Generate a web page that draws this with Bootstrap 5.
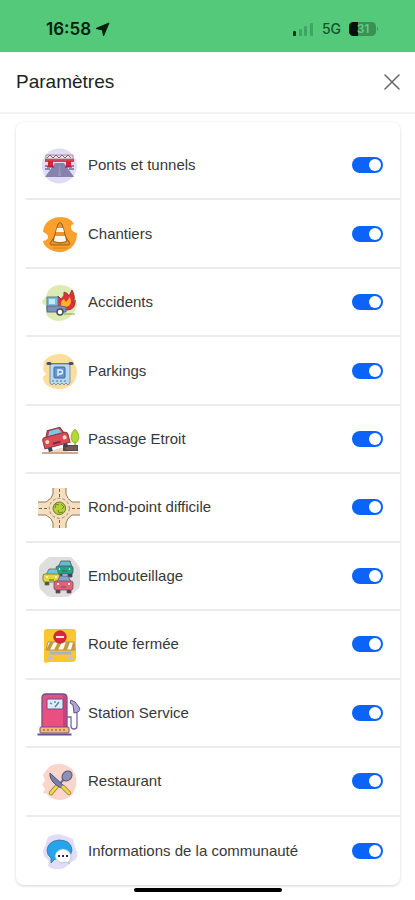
<!DOCTYPE html>
<html lang="fr">
<head>
<meta charset="utf-8">
<meta name="viewport" content="width=device-width, initial-scale=1">
<title>Paramètres</title>
<link href="https://cdn.jsdelivr.net/npm/bootstrap@5.3.0/dist/css/bootstrap.min.css" rel="stylesheet">
<style>
body { font-family: "Liberation Sans", Arial, sans-serif; color: #383838; background: #fff; }
.status-bar { background: #53c979; height: 52px; padding: 6px 36px 0 46px; color: #062b14; }
.clock { font-family: Inter, sans-serif; font-size: 17px; font-weight: 600; line-height: 20px; color: #04200e; }
.network { font-family: Inter, sans-serif; font-size: 14px; font-weight: 500; line-height: 20px; color: #14552c; }
.title-bar { height: 62px; padding: 0 15px 0 16px; border-bottom: 2px solid #f3f3f3; }
.title-bar h1 { font-size: 19px; line-height: 24px; font-weight: 400; color: #222; }
.close-button { width: 16px; height: 16px; color: #666; }
.settings-card { margin: 8px 15px 15px 16px; padding: 10px 0 0 10px; border-radius: 8px; box-shadow: 0 1px 3px rgba(0,0,0,.18); }
.setting { flex: 1 1 60px; padding: 0 17px 0 10px; border-bottom: 2px solid #ebebeb; }
.setting:last-child { border-bottom: 0; }
.setting-icon { width: 46px; height: 46px; margin-right: 6px; }
.setting label { font-size: 15px; line-height: 20px; }
.setting .form-check-input { width: 31px; height: 16px; margin: 0; float: none; border: 0; }
.setting .form-check-input:checked { background-color: #0b63f8; }
.home-indicator { bottom: 8px; width: 148px; height: 4px; border-radius: 2px; background: #000; }
</style>
<script src="https://cdn.jsdelivr.net/npm/bootstrap@5.3.0/dist/js/bootstrap.bundle.min.js" defer></script>
</head>
<body>
<div class="d-flex flex-column min-vh-100">
  <div class="status-bar d-flex align-items-center justify-content-between">
    <div class="d-flex align-items-center gap-1">
      <span class="clock">16:58</span>
      <svg width="15" height="15" viewBox="0 0 15 15" aria-hidden="true"><path d="M14 1 8.500 14 7.500 8 1 6.500Z" fill="#04200e" stroke="#04200e" stroke-linejoin="round"/></svg>
    </div>
    <div class="d-flex align-items-center gap-2">
      <svg width="22" height="14" viewBox="0 0 22 14" aria-hidden="true"><rect x="1" y="9" width="3" height="5" rx="1" fill="#07361a"/><g fill="#3fa562"><rect x="7" y="7" width="3" height="7" rx="1"/><rect x="12" y="4" width="3" height="10" rx="1"/><rect x="18" y="1" width="3" height="13" rx="1"/></g></svg>
      <span class="network">5G</span>
      <svg width="30" height="16" viewBox="0 0 30 16" role="img" aria-label="Batterie 31 %"><rect y="1" width="27" height="14" rx="4.500" fill="#3b9056"/><path d="M9 1H4.500A4.500 4.500 0 0 0 0 5.500v5A4.500 4.500 0 0 0 4.500 15H9Z" fill="#031108"/><path d="M28 6q2 2 0 4Z" fill="#3b9056"/><text x="14" y="12" text-anchor="middle" font-family="Inter, sans-serif" font-size="12" font-weight="600" fill="#62cd84">31</text></svg>
    </div>
  </div>

  <header class="title-bar d-flex align-items-center justify-content-between">
    <h1 class="m-0">Paramètres</h1>
    <button type="button" class="close-button btn p-0 border-0 d-flex" aria-label="Fermer"><svg width="16" height="16" viewBox="0 0 16 16" aria-hidden="true"><path d="m1 1 14 14M15 1 1 15" stroke="currentColor" stroke-width="1.500" stroke-linecap="round"/></svg></button>
  </header>

  <main class="settings-card d-flex flex-column flex-grow-1">
    <div class="setting d-flex align-items-center">
      <svg class="setting-icon" viewBox="0 0 46 46" aria-hidden="true">
        <circle cx="23.300" cy="24" r="17.500" fill="#dfdcf7"/>
        <path d="M19 21h9l10 14H9Z" fill="#8582ad"/><path d="m23 24-1 10h3l-1-10Z" fill="#9895bc"/>
        <path d="M9 24h7M31 24h7M9 27h5M33 27h5" stroke="#6c6a91" stroke-width="1.500"/>
        <path d="M9 17h29v3H9Z" fill="#d83e50"/><path d="M10 13h27v4H10Z" fill="#e9e3e8" stroke="#9c7685" stroke-width=".8"/>
        <path d="m11 16 3-3 3 3 3-3 3 3 3-3 3 3 3-3 3 3" fill="none" stroke="#8a6475"/>
        <path d="M12 19h5v6h-5zM30 19h5v6h-5z" fill="#d32537"/><path d="M11 25h7M29 25h7" stroke="#762c3b"/>
      </svg>
      <label class="flex-grow-1" for="bridges">Ponts et tunnels</label>
      <div class="form-switch p-0 m-0 d-flex"><input class="form-check-input" type="checkbox" role="switch" id="bridges" checked></div>
    </div>

    <div class="setting d-flex align-items-center">
      <svg class="setting-icon" viewBox="0 0 46 46" aria-hidden="true">
        <path d="M9 14Q14 6 25 6q9 0 13 7-4 1-3 4 1 4 6 5 0 10-6 15-11 8-22 1-6-4-6-8 5-1 5-4 0-3-5-5 0-4 2-7Z" fill="#fb9f2d"/>
        <path d="m18 26-3 5q-2 3 1 3h16q3 0 1-3l-3-5Z" fill="#eb922a" stroke="#956020"/>
        <path d="m22 13-5 17q7 4 14 0l-5-17q-2-3-4 0Z" fill="#f19229" stroke="#956020"/>
        <path d="M21 17h6l1 4h-8ZM19 25h10l1 5q-6 2-12 0Z" fill="#fff6e8"/>
        <path d="M17 37h15" stroke="#d98420"/>
      </svg>
      <label class="flex-grow-1" for="works">Chantiers</label>
      <div class="form-switch p-0 m-0 d-flex"><input class="form-check-input" type="checkbox" role="switch" id="works" checked></div>
    </div>

    <div class="setting d-flex align-items-center">
      <svg class="setting-icon" viewBox="0 0 46 46" aria-hidden="true">
        <path d="M12 12q4-6 12-6 11 0 14 8l3 10q0 6-4 10-5 8-15 8-8 0-12-7l1-8q-5-2-5-5 4-3 6-10Z" fill="#dcebb1"/>
        <path d="M23 30q-5-5-1-13l3 3q4-3 3-7 4 1 5 4l3-6q4 7 1 13 3-1 2-3 1 9-7 10Z" fill="#df2e3c" stroke="#8b2932" stroke-width=".8"/>
        <path d="M25 27q-1-5 3-7l2 3 4-5q3 8-4 10Z" fill="#ffb329"/>
        <path d="M11 18h11v13H11Z" fill="#86b8d8" stroke="#527c99"/><path d="M13 20h6v5h-6z" fill="#c3eafa"/>
        <path d="M11 27h14l5 1v5H11Z" fill="#7c90b8" stroke="#566a90"/>
        <circle cx="24" cy="33" r="3" fill="#fff" stroke="#46505a" stroke-width="1.500"/><path d="M28 35h11" stroke="#8c9c64"/>
      </svg>
      <label class="flex-grow-1" for="accidents">Accidents</label>
      <div class="form-switch p-0 m-0 d-flex"><input class="form-check-input" type="checkbox" role="switch" id="accidents" checked></div>
    </div>

    <div class="setting d-flex align-items-center">
      <svg class="setting-icon" viewBox="0 0 46 46" aria-hidden="true">
        <path d="M8 14Q13 6 24 6q10 0 14 9 3 4 3 10-1 10-9 14-11 5-20-1-5-3-5-9l3-3-3-4Z" fill="#fddd9b"/>
        <path d="M14 16h20v19l-2 2-2-2-2 2-2-2-2 2-2-2-2 2-2-2-2 2-2-2Z" fill="#b7d9ed" stroke="#6687a5" stroke-width=".8"/>
        <path d="M14 15.500h20" stroke="#6b7a88"/><path d="M12 15.500h2M34 15.500h2" stroke="#44515e" stroke-width="3" stroke-linecap="round"/>
        <rect x="18" y="19" width="11" height="11" rx="1" fill="#6796d1" stroke="#3f689f"/>
        <path d="M22 28v-6h2.500q2 0 2 2t-2 2H22" fill="none" stroke="#edf6ff" stroke-width="1.300"/><path d="M16 33h16" stroke="#4a7594" stroke-dasharray="2 2"/>
      </svg>
      <label class="flex-grow-1" for="parking">Parkings</label>
      <div class="form-switch p-0 m-0 d-flex"><input class="form-check-input" type="checkbox" role="switch" id="parking" checked></div>
    </div>

    <div class="setting d-flex align-items-center">
      <svg class="setting-icon" viewBox="0 0 46 46" aria-hidden="true">
        <path d="M6 36h36v2H6Z" fill="#cfa98f"/><path d="m12 36 12-4h8v4Z" fill="#edd6c1"/>
        <path d="M39 18v14" stroke="#657b2d"/><path d="M39 13q-4 3-4 9 1 5 4 5t4-5q0-6-4-9Z" fill="#b0d82e" stroke="#83a92d" stroke-width=".7"/>
        <path d="M27 29h15v6H27Z" fill="#5b4642"/><path d="M28 31h13M30 33h11" stroke="#997970" stroke-width=".8"/>
        <g transform="translate(-1 -1) rotate(-15 20 25)"><path d="M11 30h4v5h-4zM27 30h4v5h-4z" fill="#354555"/><path d="m11 22 4-8h13l3 8Z" fill="#d3414f" stroke="#813641"/><path d="m14 20 3-5h9l3 5Z" fill="#79c9e5"/><path d="M8 23q0-3 3-3h20q3 0 3 3v8H8Z" fill="#df4a58" stroke="#893642"/><circle cx="12" cy="25" r="2" fill="#ffe0c4"/><circle cx="30" cy="25" r="2" fill="#ffe0c4"/><path d="M17 28h8" stroke="#752b3d" stroke-width="2"/></g>
      </svg>
      <label class="flex-grow-1" for="narrow">Passage Etroit</label>
      <div class="form-switch p-0 m-0 d-flex"><input class="form-check-input" type="checkbox" role="switch" id="narrow" checked></div>
    </div>

    <div class="setting d-flex align-items-center">
      <svg class="setting-icon" viewBox="0 0 46 46" aria-hidden="true">
        <path d="M17 4h13v7q0 3 3 4l3 3h8v13h-8l-4 4q-2 2-2 9H17q0-7-2-9l-4-4H2V18h8l4-4q3-2 3-10Z" fill="#f6dfbf"/>
        <path d="M17 4v6q-1 5-7 8H2M30 4v6q1 5 6 8h8M2 31h8q6 3 7 8v5M44 31h-8q-5 3-6 8v5" fill="none" stroke="#90795f"/>
        <circle cx="23.300" cy="24.300" r="10" fill="none" stroke="#9c8569" stroke-dasharray="3 2"/>
        <path d="M23.500 5v8M23.500 36v8M3 24.500h8M36 24.500h8" stroke="#78624d" stroke-dasharray="3 2"/>
        <circle cx="23.300" cy="24.300" r="6.300" fill="#b6cf36" stroke="#687c35"/>
        <path d="m19 24 1-4 3 1M25 20l3 3-2 2M27 28l-4 1-1-3" fill="none" stroke="#6f8a2c"/>
      </svg>
      <label class="flex-grow-1" for="roundabout">Rond-point difficile</label>
      <div class="form-switch p-0 m-0 d-flex"><input class="form-check-input" type="checkbox" role="switch" id="roundabout" checked></div>
    </div>

    <div class="setting d-flex align-items-center">
      <svg class="setting-icon" viewBox="0 0 46 46" aria-hidden="true">
        <path d="M14 4h19q3 0 5 3l4 5q2 2 2 5v15q0 3-3 5l-5 4q-2 3-6 3H14q-3 0-5-3l-4-4q-2-2-2-6V15q0-3 3-5l4-4q2-2 4-2Z" fill="#dedede"/>
        <g stroke="#3d5963" stroke-width=".8"><path d="M22 19h4v5h-4zM32 19h4v5h-4z" fill="#354850"/><path d="m22 14 3-6h9l2 6Z" fill="#65bdc9"/><rect x="20" y="13" width="17" height="8" rx="2" fill="#28a18c"/></g>
        <g stroke="#697044" stroke-width=".8"><path d="M9 28h4v4H9zM19 28h4v4h-4z" fill="#4e533d"/><path d="m10 22 3-6h8l2 6Z" fill="#72c7de"/><rect x="7" y="21" width="17" height="8" rx="2" fill="#e2d73d"/></g>
        <g stroke="#764c65" stroke-width=".8"><path d="M20 35h4v5h-4zM31 35h4v5h-4z" fill="#4c4055"/><path d="m21 29 3-6h8l3 6Z" fill="#79aad6"/><rect x="18" y="28" width="19" height="9" rx="2" fill="#e36176"/></g>
        <path d="M23 16h1M33 16h1M10 24h2M19 24h2M21 31h2M32 31h2" stroke="#fff0aa" stroke-width="2"/><path d="M26 18h5M13 27h5M25 34h5" stroke="#475966"/>
      </svg>
      <label class="flex-grow-1" for="traffic">Embouteillage</label>
      <div class="form-switch p-0 m-0 d-flex"><input class="form-check-input" type="checkbox" role="switch" id="traffic" checked></div>
    </div>

    <div class="setting d-flex align-items-center">
      <svg class="setting-icon" viewBox="0 0 46 46" aria-hidden="true">
        <path d="M11 8h26q3 0 3 3v26q0 4-4 4H14l-5 1q-2-2-1-5V11q0-3 3-3Z" fill="#fdc62e"/>
        <path d="M14 20v18M35 20v18M11 37h6M32 37h6" stroke="#b8c5cf" stroke-width="2"/><path d="M14 32h21" stroke="#a5b5c0" stroke-width="3"/>
        <path d="M12 21h26l1 8H10Z" fill="#fff8e9" stroke="#8b7b56" stroke-width=".7"/>
        <path d="M14 21h4l-4 8h-4ZM22 21h4l-4 8h-4ZM30 21h4l-3 8h-4ZM37 21l1 1 1 7h-4Z" fill="#c49a44"/>
        <circle cx="24" cy="16" r="6.200" fill="#dc263c" stroke="#9a2933" stroke-width=".8"/><path d="M20 16h8" stroke="#ffe5dc" stroke-width="2"/>
      </svg>
      <label class="flex-grow-1" for="closed">Route fermée</label>
      <div class="form-switch p-0 m-0 d-flex"><input class="form-check-input" type="checkbox" role="switch" id="closed" checked></div>
    </div>

    <div class="setting d-flex align-items-center">
      <svg class="setting-icon" viewBox="0 0 46 46" aria-hidden="true">
        <path d="M6 38V8q0-4 4-4h17q4 0 4 4v30Z" fill="#e94f80" stroke="#68518d" stroke-width="1.300"/>
        <path d="M27 5q3 1 3 4v28h-3Z" fill="#ce3f75"/>
        <rect x="11" y="9" width="16" height="10" rx="1" fill="#d9edfb" stroke="#68518d"/><path d="m19 17 4-5M14 13l2 1M19 11v2" stroke="#54809f" stroke-width="1.300"/>
        <rect x="4" y="37" width="29" height="6" rx="1" fill="#f5ba79" stroke="#68518d"/><path d="M7 40h23" stroke="#a86d65" stroke-width="1.500" stroke-dasharray="2 2"/>
        <path d="M1.500 44.500h34" stroke="#68518d" stroke-width="2"/>
        <path d="M31 27h4v9q0 3 3 3t3-3V23l-2-5" fill="none" stroke="#7b65a0" stroke-width="1.300"/>
        <path d="m35 10 4 2 4 5q2 3-1 5l-4 1-1-8-3-2Z" fill="#aaa6ce" stroke="#68518d"/>
      </svg>
      <label class="flex-grow-1" for="station">Station Service</label>
      <div class="form-switch p-0 m-0 d-flex"><input class="form-check-input" type="checkbox" role="switch" id="station" checked></div>
    </div>

    <div class="setting d-flex align-items-center">
      <svg class="setting-icon" viewBox="0 0 46 46" aria-hidden="true">
        <path d="M12 10q6-5 14-4 10 2 13 10 2 5 1 12l-3 8q-6 6-14 6-9-1-12-6l-4-1 2-4-3-5 3-3-2-6Z" fill="#fad5cb"/>
        <path d="m28 21-7 8" stroke="#6a7198" stroke-width="2"/>
        <path d="m21 28-6 7" stroke="#91803d" stroke-width="4.500" stroke-linecap="round"/><path d="m21 28-6 7" stroke="#efd447" stroke-width="3" stroke-linecap="round"/>
        <ellipse cx="31" cy="18" rx="5.500" ry="4.500" transform="rotate(-45 31 18)" fill="#8d91b9" stroke="#535a7b"/>
        <path d="M14 15q-1 6 6 12l5 3 2-3Z" fill="#7780ad" stroke="#4d5678"/>
        <path d="m27 29 6 6" stroke="#91803d" stroke-width="4.500" stroke-linecap="round"/><path d="m27 29 6 6" stroke="#efd447" stroke-width="3" stroke-linecap="round"/>
      </svg>
      <label class="flex-grow-1" for="restaurant">Restaurant</label>
      <div class="form-switch p-0 m-0 d-flex"><input class="form-check-input" type="checkbox" role="switch" id="restaurant" checked></div>
    </div>

    <div class="setting d-flex align-items-center">
      <svg class="setting-icon" viewBox="0 0 46 46" aria-hidden="true">
        <path d="M12 9q9-5 17-1l8 3 2 8q4 7 1 12l-7 5q-5 6-12 5-5 1-9-3l1-5-5-5q-2-6 1-10Z" fill="#e2dcf7"/>
        <path d="M15 30q-4-3-4-8 1-9 12-10 12 0 13 10-1 9-13 10l-4-1-4 4Z" fill="#24a4ed" stroke="#397196" stroke-width=".8"/>
        <path d="M32 34q3-2 3-6-1-6-8-7-7 1-8 7 1 6 8 7l3-1 4 2Z" fill="#fff" stroke="#a6b6c8" stroke-width=".7"/>
        <path d="M22 28h2M26 28h2M30 28h2" stroke="#222f3b" stroke-width="2"/>
      </svg>
      <label class="flex-grow-1" for="community">Informations de la communauté</label>
      <div class="form-switch p-0 m-0 d-flex"><input class="form-check-input" type="checkbox" role="switch" id="community" checked></div>
    </div>
  </main>
</div>
<div class="home-indicator position-fixed start-50 translate-middle-x"></div>
</body>
</html>
